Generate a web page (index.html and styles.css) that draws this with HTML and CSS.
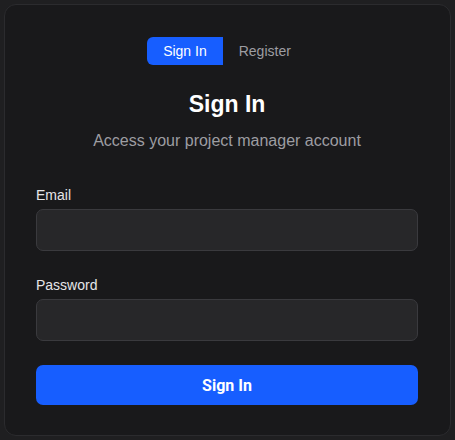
FILE: index.html
```html
<!DOCTYPE html>
<html lang="en">
<head>
<meta charset="utf-8">
<title>Sign In</title>
<link rel="stylesheet" href="styles.css">
</head>
<body>
<div class="card">
  <div class="tabs">
    <button class="tab tab-active">Sign In</button>
    <button class="tab">Register</button>
  </div>
  <h1 class="title">Sign In</h1>
  <p class="subtitle">Access your project manager account</p>
  <form class="form">
    <div class="field">
      <label class="label" for="email">Email</label>
      <input class="input" id="email" type="email">
    </div>
    <div class="field">
      <label class="label" for="password">Password</label>
      <input class="input" id="password" type="password">
    </div>
    <button class="submit" type="button">Sign In</button>
  </form>
</div>
</body>
</html>
```
FILE: styles.css
```css
html, body {
  margin: 0;
  background: #1f1f21;
}
body {
  padding: 4px;
  font-family: "Liberation Sans", Arial, sans-serif;
  color: #fff;
}
.card {
  width: 447px;
  height: 432px;
  box-sizing: border-box;
  background: #19191b;
  border: 1px solid #2b2b2e;
  border-radius: 12px;
  padding: 32px 32px 30px 31px;
  display: flex;
  flex-direction: column;
}
.tabs {
  display: flex;
  justify-content: center;
}
.tab {
  height: 28px;
  padding: 0 16px;
  border: 0;
  background: transparent;
  color: #9d9da2;
  font-family: "Liberation Sans", Arial, sans-serif;
  font-size: 14px;
  border-radius: 0 6px 6px 0;
}
.tab-active {
  background: #175eff;
  color: #fff;
  border-radius: 6px 0 0 6px;
}
.title {
  margin: 23px 0 0;
  font-family: "Liberation Sans", Arial, sans-serif;
  font-size: 23px;
  line-height: 32px;
  font-weight: bold;
  text-align: center;
  color: #fff;
}
.subtitle {
  margin: 9px 0 0;
  font-size: 16px;
  line-height: 24px;
  text-align: center;
  color: #9d9da2;
}
.form {
  margin-top: 32px;
  display: flex;
  flex-direction: column;
  gap: 24px;
}
.field {
  display: flex;
  flex-direction: column;
  gap: 4px;
}
.label {
  font-size: 14px;
  line-height: 20px;
  color: #e6e6e8;
}
.input {
  height: 42px;
  box-sizing: border-box;
  background: #272729;
  border: 1px solid #3a3a3e;
  border-radius: 7px;
  margin: 0;
  padding: 0 12px;
  color: #fff;
  font-size: 14px;
}
.submit {
  height: 40px;
  border: 0;
  border-radius: 7px;
  background: #175eff;
  color: #fff;
  font-family: Roboto, "Liberation Sans", sans-serif;
  font-weight: bold;
  font-size: 16px;
}
```
